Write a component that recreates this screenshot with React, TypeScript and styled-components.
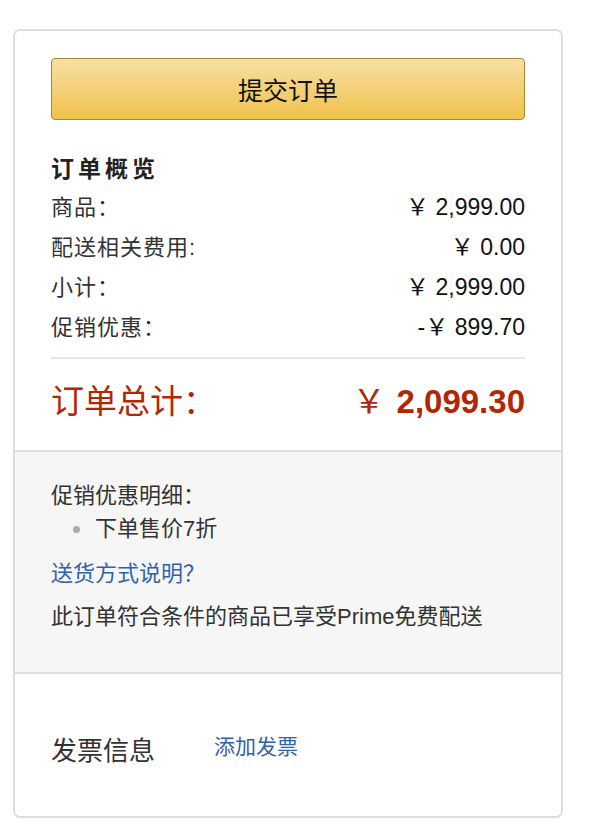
import React from 'react';
import styled, { createGlobalStyle } from 'styled-components';

const GlobalStyle = createGlobalStyle`
  body {
    margin: 0;
    background: #fff;
    font-family: "Liberation Sans", "Noto Sans CJK SC", sans-serif;
    color: #111;
  }
`;

const summaryRows = [
  { label: '商品：', value: '￥ 2,999.00' },
  { label: '配送相关费用:', value: '￥ 0.00' },
  { label: '小计：', value: '￥ 2,999.00' },
  { label: '促销优惠：', value: '-￥ 899.70' },
];

const App: React.FC = () => {
  return (
    <>
      <GlobalStyle />
      <Card>
        <TopSection>
          <SubmitButton type="button">提交订单</SubmitButton>
          <Title>订单概览</Title>
          {summaryRows.map((row) => (
            <Row key={row.label}>
              <span>{row.label}</span>
              <Value>{row.value}</Value>
            </Row>
          ))}
          <Divider />
          <TotalRow>
            <span>订单总计：</span>
            <TotalValue>
              <Yen>￥</Yen> 2,099.30
            </TotalValue>
          </TotalRow>
        </TopSection>
        <GraySection>
          <Text>促销优惠明细：</Text>
          <PromoList>
            <li>下单售价7折</li>
          </PromoList>
          <Link href="#">送货方式说明？</Link>
          <Text>此订单符合条件的商品已享受Prime免费配送</Text>
        </GraySection>
        <InvoiceSection>
          <InvoiceLabel>发票信息</InvoiceLabel>
          <InvoiceLink href="#">添加发票</InvoiceLink>
        </InvoiceSection>
      </Card>
    </>
  );
};

const Card = styled.div`
  margin: 29px 0 0 13px;
  width: 546px;
  border: 2px solid #ddd;
  border-radius: 7px;
  overflow: hidden;
  background: #fff;
`;

const TopSection = styled.div`
  padding: 27px 36px 12px 36px;
  display: flex;
  flex-direction: column;
`;

const SubmitButton = styled.button`
  height: 62px;
  width: 100%;
  border: 1px solid #a88734;
  border-radius: 4px;
  background: linear-gradient(to bottom, #f7dfa5, #f0c14b);
  font-family: "Noto Sans CJK SC", sans-serif;
  font-size: 25px;
  color: #111;
  cursor: pointer;
  margin-bottom: 29px;
`;

const Title = styled.div`
  font-size: 23px;
  font-weight: bold;
  letter-spacing: 4px;
  font-family: "Noto Sans CJK SC", sans-serif;
  line-height: 36px;
  color: #222;
`;

const Row = styled.div`
  display: flex;
  justify-content: space-between;
  align-items: center;
  height: 40px;
  font-size: 22px;
  letter-spacing: 1px;
  color: #333;
  font-family: "Liberation Sans", "Noto Sans CJK SC", sans-serif;
`;

const Value = styled.span`
  color: #111;
  font-size: 23px;
  letter-spacing: 0;
`;

const Divider = styled.div`
  height: 2px;
  background: #e7e7e7;
  margin: 12px 0 0;
`;

const TotalRow = styled.div`
  display: flex;
  justify-content: space-between;
  align-items: center;
  height: 79px;
  color: #b12704;
  font-size: 33px;
  font-family: "Noto Sans CJK SC", sans-serif;
`;

const TotalValue = styled.span`
  font-family: "Liberation Sans", sans-serif;
  font-weight: bold;
  font-size: 33px;
`;

const Yen = styled.span`
  font-family: "Noto Sans CJK SC", sans-serif;
  font-weight: normal;
  margin-right: 2px;
`;

const GraySection = styled.div`
  background: #f6f6f6;
  border-top: 2px solid #ddd;
  border-bottom: 2px solid #ddd;
  padding: 27px 36px 38px 36px;
  display: flex;
  flex-direction: column;
  font-size: 22px;
  color: #333;
  font-family: "Liberation Sans", "Noto Sans CJK SC", sans-serif;
`;

const Text = styled.div`
  line-height: 34px;
`;

const PromoList = styled.ul`
  margin: 0 0 12px;
  padding-left: 44px;
  line-height: 32px;
  list-style: none;

  li {
    position: relative;
  }

  li::before {
    content: '';
    position: absolute;
    left: -22px;
    top: 13px;
    width: 7px;
    height: 7px;
    border-radius: 50%;
    background: #aaa;
  }
`;

const Link = styled.a`
  color: #2f63ae;
  text-decoration: none;
  line-height: 34px;
  margin-bottom: 9px;
`;

const InvoiceSection = styled.div`
  height: 142px;
  display: flex;
  align-items: center;
  padding: 0 36px;
  gap: 59px;
  font-family: "Noto Sans CJK SC", sans-serif;
`;

const InvoiceLabel = styled.span`
  font-size: 26px;
  color: #333;
  margin-top: 6px;
`;

const InvoiceLink = styled.a`
  font-size: 21px;
  color: #2f63ae;
  text-decoration: none;
`;

export default App;
